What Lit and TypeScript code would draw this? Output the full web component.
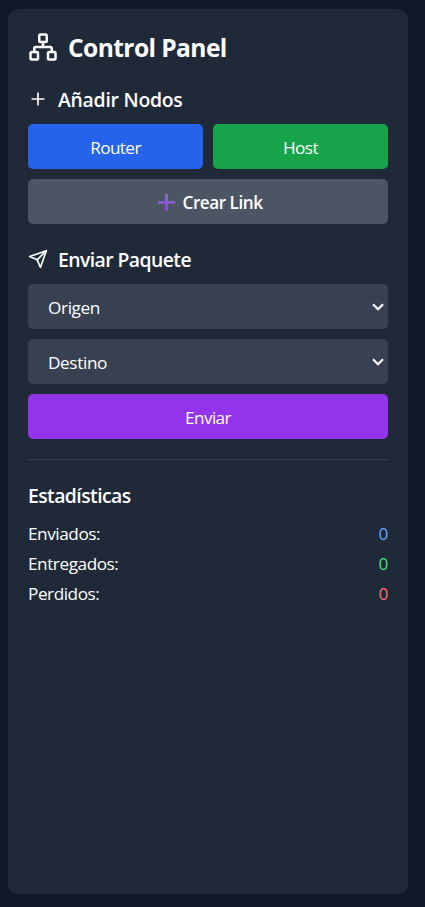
import { LitElement, html, css, svg } from "lit";
import { customElement } from "lit/decorators.js";

const networkIcon = svg`
  <rect x="16" y="16" width="6" height="6" rx="1" />
  <rect x="2" y="16" width="6" height="6" rx="1" />
  <rect x="9" y="2" width="6" height="6" rx="1" />
  <path d="M5 16v-3a1 1 0 0 1 1-1h12a1 1 0 0 1 1 1v3" />
  <path d="M12 12V8" />`;
const plusIcon = svg`<path d="M5 12h14M12 5v14" />`;
const sendIcon = svg`<path d="m22 2-7 20-4-9-9-4Z" /><path d="M22 2 11 13" />`;
const chevron = html`<svg class="chevron" viewBox="0 0 12 8"><path d="M1 1.3 6 6.2 11 1.3" /></svg>`;

@customElement("app-root")
export class AppRoot extends LitElement {
  static styles = css`
    :host {
      display: block;
      box-sizing: border-box;
      height: 907px;
      padding: 9px 17px 13px 8px;
      background: #111827;
      color: #fff;
      font: 17.2px/25px "Open Sans", "Noto Sans", sans-serif;
    }
    .panel {
      box-sizing: border-box;
      height: 100%;
      padding: 20px;
      border-radius: 10px;
      background: #1f2937;
      display: flex;
      flex-direction: column;
      gap: 20px;
    }
    h2, h3 { margin: 0; display: flex; align-items: center; gap: 10px; white-space: nowrap; }
    h2 { font-size: 24.6px; line-height: 35px; font-weight: 700; letter-spacing: -0.6px; }
    h3 { font-size: 19.4px; line-height: 30px; font-weight: 650; letter-spacing: -0.58px; height: 30px; }
    h2 span, h3 span { padding-top: 2px; }
    h2 { height: 35px; }
    .wide { letter-spacing: -0.26px; }
    .icon { width: 20px; height: 20px; fill: none; stroke: currentColor; stroke-width: 2; stroke-linecap: round; stroke-linejoin: round; flex: none; }
    .large { width: 30px; height: 30px; }
    section { display: flex; flex-direction: column; gap: 10px; }
    .pair { display: grid; grid-template-columns: 1fr 1fr; gap: 10px; }
    button, .select {
      box-sizing: border-box;
      height: 45px;
      border: 0;
      border-radius: 5px;
      padding: 2px 20px 0;
      color: inherit;
      font: inherit;
      letter-spacing: -0.6px;
      display: flex;
      align-items: center;
      justify-content: center;
    }
    .blue { background: #2563eb; }
    .green { background: #16a34a; }
    .gray { background: #4b5563; font-weight: 600; gap: 8px; letter-spacing: -0.5px; }
    .purple { background: #9333ea; }
    .select { background: #374151; justify-content: space-between; padding: 1px 4px 0 20px; letter-spacing: -0.38px; }
    .chevron { width: 12px; height: 8px; fill: none; stroke: #fff; stroke-width: 2.2; margin-top: -1px; }
    .add { width: 17px; height: 17px; margin-left: 4px; }
    .stats { border-top: 1px solid #374151; padding-top: 20px; }
    .rows { display: flex; flex-direction: column; gap: 5px; letter-spacing: -0.45px; padding-top: 1px; }
    .row { display: flex; justify-content: space-between; }
    .sent { color: #60a5fa; }
    .ok { color: #4ade80; }
    .lost { color: #f87171; }
  `;

  render() {
    return html`
      <div class="panel">
        <h2><svg class="icon large" viewBox="0 0 24 24">${networkIcon}</svg><span>Control Panel</span></h2>
        <section>
          <h3 class="wide"><svg class="icon" viewBox="0 0 24 24">${plusIcon}</svg><span>Añadir Nodos</span></h3>
          <div class="pair">
            <button class="blue"><span>Router</span></button>
            <button class="green"><span>Host</span></button>
          </div>
          <button class="gray">
            <svg class="add" viewBox="0 0 17 17">
              <defs>
                <linearGradient id="plus" x1="0" y1="0" x2="0" y2="1">
                  <stop offset="0" stop-color="#8b6fc4" />
                  <stop offset="1" stop-color="#8344dd" />
                </linearGradient>
              </defs>
              <path fill="url(#plus)" d="M7 0h3v7h7v3h-7v7H7v-7H0V7h7z" />
            </svg>
            <span>Crear Link</span>
          </button>
        </section>
        <section>
          <h3><svg class="icon" viewBox="0 0 24 24">${sendIcon}</svg><span>Enviar Paquete</span></h3>
          <div class="select"><span>Origen</span>${chevron}</div>
          <div class="select"><span>Destino</span>${chevron}</div>
          <button class="purple"><span>Enviar</span></button>
        </section>
        <section class="stats">
          <h3><span>Estadísticas</span></h3>
          <div class="rows">
            <div class="row"><span>Enviados:</span><span class="sent">0</span></div>
            <div class="row"><span>Entregados:</span><span class="ok">0</span></div>
            <div class="row"><span>Perdidos:</span><span class="lost">0</span></div>
          </div>
        </section>
      </div>
    `;
  }
}
